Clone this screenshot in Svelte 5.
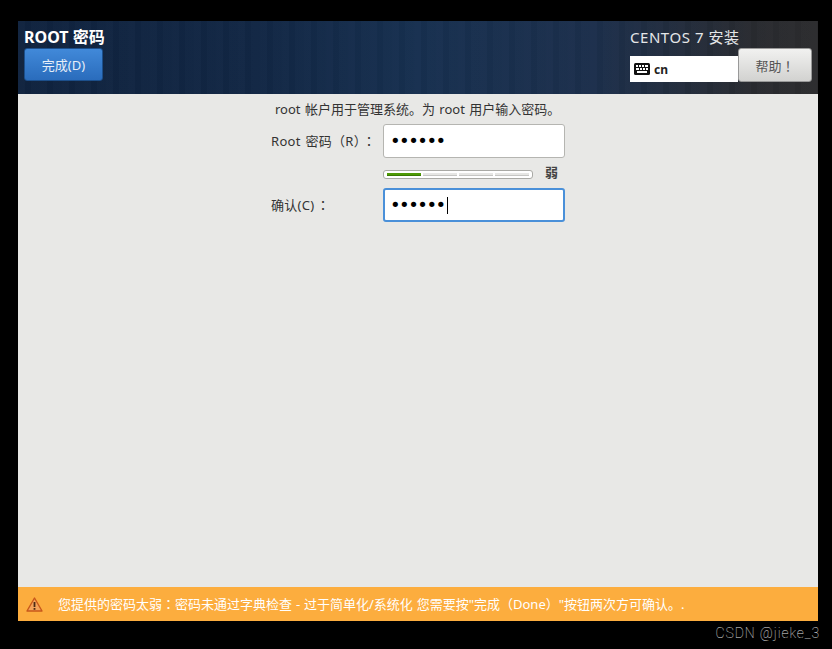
<script>
  let password = "••••••";
  let segments = [true, false, false, false];
</script>

<div class="screen">
  <div class="window">
    <header class="top">
      <div class="left">
        <h1>ROOT 密码</h1>
        <button class="done">完成(D)</button>
      </div>
      <div class="right">
        <div class="product">CENTOS 7 安装</div>
        <div class="kbd_row">
          <div class="kbd">
            <svg width="16" height="12" viewBox="0 0 16 12">
              <rect width="16" height="12" rx="1.5" fill="#111" />
              <g fill="#fff">
                <rect x="2" y="2" width="2" height="2" />
                <rect x="5" y="2" width="2" height="2" />
                <rect x="8" y="2" width="2" height="2" />
                <rect x="11" y="2" width="3" height="2" />
                <rect x="2" y="5" width="3" height="2" />
                <rect x="6" y="5" width="2" height="2" />
                <rect x="9" y="5" width="2" height="2" />
                <rect x="12" y="5" width="2" height="2" />
                <rect x="3" y="8" width="10" height="2" />
              </g>
            </svg>
            <span>cn</span>
          </div>
          <button class="help">帮助<span class="tc">！</span></button>
        </div>
      </div>
    </header>

    <main class="content">
      <div class="form">
        <p class="intro">root 帐户用于管理系统。为 root 用户输入密码。</p>
        <div class="row first">
          <span class="lbl">Root 密码（R）<span class="tc colon">：</span></span>
          <div class="field">{password}</div>
        </div>
        <div class="row strength">
          <span></span>
          <div class="meter_wrap">
            <div class="meter">
              {#each segments as on}
                <div class="seg" class:on></div>
              {/each}
            </div>
            <span class="weak">弱</span>
          </div>
        </div>
        <div class="row">
          <span class="lbl">确认(C)<span class="tc colon">：</span></span>
          <div class="field focus">{password}<i class="caret"></i></div>
        </div>
      </div>
    </main>

    <footer class="warn">
      <svg width="17" height="15" viewBox="0 0 17 15">
        <path d="M8.5 1 L16 14 H1 Z" fill="#f3a35a" stroke="#c8581a" stroke-width="1.4" stroke-linejoin="round" />
        <rect x="7.6" y="5" width="1.8" height="5" fill="#4a2a14" />
        <rect x="7.6" y="11" width="1.8" height="1.8" fill="#4a2a14" />
      </svg>
      <span class="warn_text">您提供的密码太弱<span class="tc">：</span>密码未通过字典检查 - 过于简单化/系统化 您需要按"完成（Done）"按钮两次方可确认。.</span>
    </footer>
  </div>
  <div class="mark">CSDN @jieke_3</div>
</div>

<style>
  :global(body) {
    background: #000;
    font-family: "Noto Sans", "Noto Sans CJK SC", sans-serif;
  }

  .screen {
    height: 649px;
    padding: 21px 12px 0 18px;
    box-sizing: border-box;
    overflow: hidden;
  }

  .window {
    width: 800px;
    height: 600px;
    display: flex;
    flex-direction: column;
  }

  .tc {
    font-family: "Noto Sans CJK TC", sans-serif;
  }

  .top {
    height: 73px;
    flex: none;
    display: flex;
    justify-content: space-between;
    color: #fff;
    background:
      repeating-linear-gradient(90deg, rgba(255,255,255,0.012) 0 7px, rgba(0,0,0,0.03) 7px 13px, rgba(255,255,255,0.008) 13px 22px),
      linear-gradient(90deg, #10233f 0%, #122745 30%, #173050 50%, #1c2f4c 72%, #292b30 92%, #2c2c2e 100%);
  }

  .left {
    padding: 7px 0 0 6px;
  }

  h1 {
    margin: 0 0 2px;
    font-size: 16px;
    line-height: 18px;
    font-weight: 700;
    color: #fff;
  }

  .done {
    display: block;
    width: 79px;
    height: 33px;
    padding: 0;
    border: 1px solid #1c4f8b;
    border-radius: 3px;
    background: linear-gradient(#4189d9, #2a6cbc);
    color: #e6eef8;
    font: 13px "Noto Sans", "Noto Sans CJK SC", sans-serif;
  }

  .right {
    width: 188px;
    padding-top: 6px;
    box-sizing: border-box;
  }

  .product {
    font-size: 15px;
    line-height: 21px;
    color: #e4e6e8;
    letter-spacing: 0.55px;
  }

  .kbd_row {
    display: flex;
    align-items: flex-end;
  }

  .kbd {
    width: 108px;
    height: 26px;
    margin-top: 8px;
    background: #fff;
    display: flex;
    align-items: center;
    gap: 4px;
    padding-left: 4px;
    box-sizing: border-box;
    color: #222;
    font-size: 12px;
    font-weight: 700;
  }

  .help {
    width: 74px;
    height: 34px;
    padding: 0;
    border: 1px solid #999;
    border-radius: 3px;
    background: linear-gradient(#f1f1f0, #d2d2d0);
    color: #555;
    font: 13px "Noto Sans", "Noto Sans CJK SC", sans-serif;
  }

  .content {
    flex: 1;
    background: #e8e8e6;
    padding: 6px 0 0 253px;
    color: #333;
    font-size: 13px;
  }

  .form {
    width: 320px;
  }

  .intro {
    margin: 0 0 6px 4px;
    line-height: 18px;
    white-space: nowrap;
    word-spacing: 1px;
  }

  .row {
    display: grid;
    grid-template-columns: 112px 182px;
    align-items: center;
  }

  .lbl {
    white-space: nowrap;
    word-spacing: 1px;
    letter-spacing: 0.3px;
    padding-bottom: 2px;
  }

  .colon {
    margin-left: 2px;
  }

  .field {
    height: 34px;
    box-sizing: border-box;
    background: #fff;
    border: 1px solid #b5b5b1;
    border-radius: 3px;
    padding-left: 6px;
    display: flex;
    align-items: center;
    color: #000;
    font: 18px/1 "DejaVu Sans", sans-serif;
    letter-spacing: -1.5px;
  }

  .field.focus {
    border: 2px solid #4a90d9;
    padding-left: 5px;
  }

  .caret {
    width: 1px;
    height: 17px;
    background: #000;
    margin-left: 2px;
  }

  .strength {
    margin: 7px 0 8px;
    height: 15px;
  }

  .meter_wrap {
    display: flex;
    align-items: center;
    white-space: nowrap;
  }

  .meter {
    width: 150px;
    height: 9px;
    flex: none;
    box-sizing: border-box;
    background: #fff;
    border: 1px solid #a9a9a5;
    border-radius: 3px;
    padding: 2px 3px;
    display: flex;
    gap: 2px;
  }

  .seg {
    flex: 1;
    background: #e6e6e4;
    border: solid #c6c6c4;
    border-width: 0 0 1px;
  }

  .seg.on {
    background: #4e9a06;
    border-color: #3a7a02;
  }

  .weak {
    margin-left: 12px;
    margin-bottom: 4px;
    font-size: 13px;
    line-height: 15px;
    font-weight: 700;
    color: #444;
  }

  .warn {
    height: 34px;
    flex: none;
    display: flex;
    align-items: center;
    box-sizing: border-box;
    padding-left: 8px;
    gap: 15px;
    background: #fcad3e;
    color: #fff;
    font-size: 13px;
    word-spacing: 0.5px;
    white-space: nowrap;
  }

  .warn_text {
    padding-bottom: 2px;
  }

  .mark {
    margin-top: 3px;
    text-align: right;
    font: 100 14px/18px Roboto, sans-serif;
    letter-spacing: 0.9px;
    color: #e2e2e2;
  }
</style>
